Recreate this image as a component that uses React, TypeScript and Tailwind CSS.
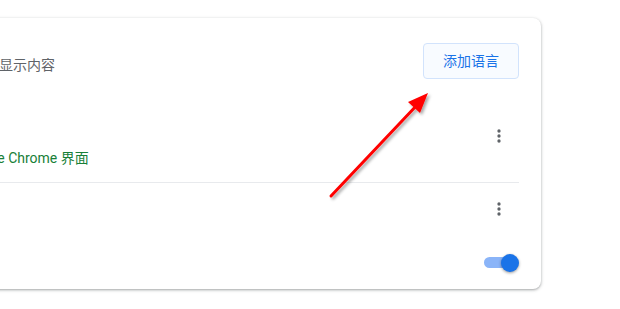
import React from "react";

function Kebab() {
  return (
    <button className="flex h-10 w-10 items-center justify-center">
      <svg width="20" height="20" viewBox="0 0 24 24" fill="#5f6368">
        <circle cx="12" cy="6" r="2" />
        <circle cx="12" cy="12" r="2" />
        <circle cx="12" cy="18" r="2" />
      </svg>
    </button>
  );
}

export default function App() {
  return (
    <div
      className="relative h-[309px] w-[620px] overflow-hidden bg-white"
      style={{ fontFamily: "Roboto, 'Noto Sans CJK SC', sans-serif" }}
    >
      <div className="pt-[18px]">
        <div className="ml-[-189px] w-[730px] rounded-lg bg-white pl-[20px] pr-[22px] pt-[25px] shadow-[0_1px_2px_rgba(60,64,67,0.3),0_1px_3px_1px_rgba(60,64,67,0.15)]">
          <div className="flex items-start justify-between">
            <div className="mt-[12px] whitespace-nowrap text-[14px] leading-5 text-[#5f6368]">
              网站会尽量以您的首选语言显示内容
            </div>
            <button className="flex h-[36px] w-[96px] items-center justify-center rounded border border-[#d2e3fc] bg-[#f8fbff] text-[14px] text-[#1a73e8]">
              添加语言
            </button>
          </div>
          <div className="mt-[19px]">
            <div className="flex h-[85px] items-start justify-between border-b border-[#e8eaed]">
              <div className="mt-[30px] whitespace-nowrap text-[14px] leading-5">
                <div className="text-[#202124]">中文</div>
                <div className="text-[#188038]">此语言目前用于显示 Google Chrome 界面</div>
              </div>
              <div className="mt-[18px]">
                <Kebab />
              </div>
            </div>
            <div className="flex h-[52px] items-start justify-between">
              <div className="mt-[16px] text-[14px] leading-5 text-[#202124]">English</div>
              <div className="mt-[6px]">
                <Kebab />
              </div>
            </div>
            <div className="flex h-[54px] items-center justify-between">
              <div className="text-[14px] text-[#202124]">使用 Google 翻译</div>
              <div className="relative mt-[2px] h-[18px] w-[35px]">
                <div className="absolute left-0 top-[3px] h-[11px] w-[28px] rounded-full bg-[#8ab4f8]" />
                <div className="absolute right-0 top-0 h-[18px] w-[18px] rounded-full bg-[#1a73e8] shadow-[0_1px_3px_rgba(0,0,0,0.4)]" />
              </div>
            </div>
          </div>
        </div>
      </div>
      <svg
        className="pointer-events-none absolute left-0 top-0"
        width="620"
        height="309"
        viewBox="0 0 620 309"
      >
        <defs>
          <filter id="sh" x="-20%" y="-20%" width="140%" height="140%">
            <feDropShadow dx="2" dy="2" stdDeviation="1.5" floodColor="#000" floodOpacity="0.35" />
          </filter>
        </defs>
        <g filter="url(#sh)">
          <line x1="331" y1="196" x2="418" y2="104" stroke="#ff0000" strokeWidth="3" strokeLinecap="round" />
          <polygon points="428,93 408,102 420,113" fill="#ff0000" />
        </g>
      </svg>
    </div>
  );
}
